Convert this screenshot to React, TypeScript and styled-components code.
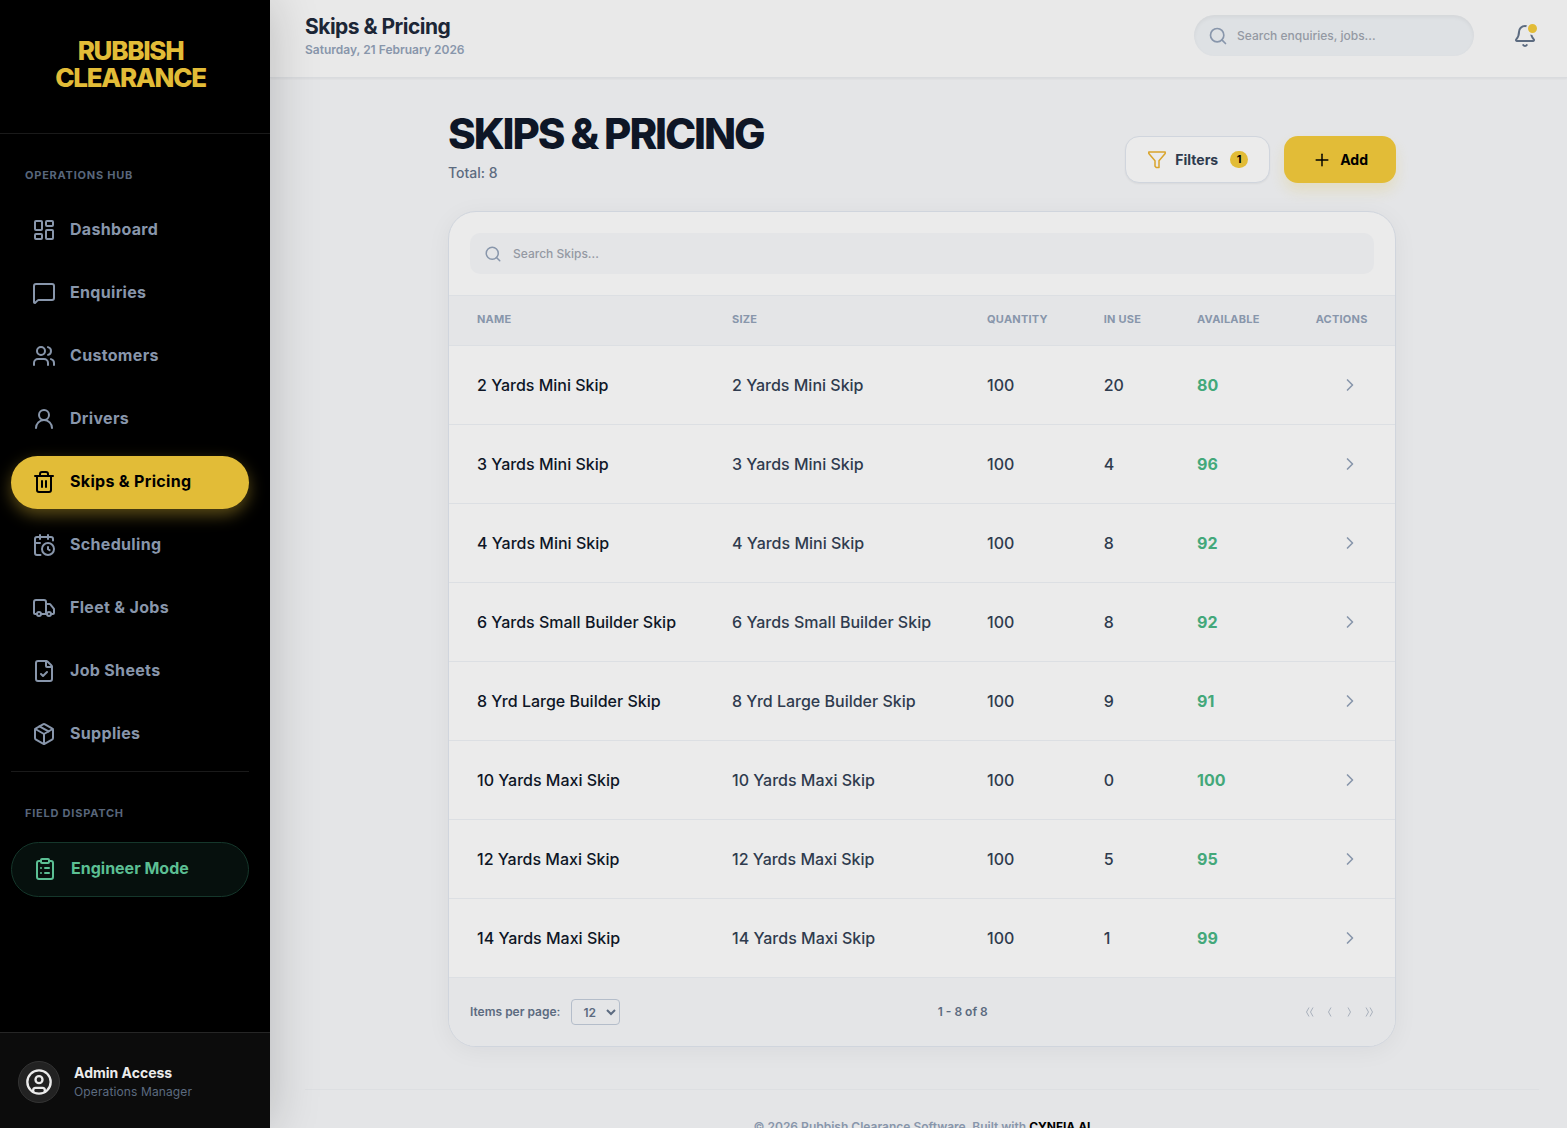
import React from "react";
import styled, { createGlobalStyle, css } from "styled-components";
import {
  Bell, CalendarClock, ChevronRight, CircleUser, ClipboardList, FileCheck, LayoutDashboard,
  MessageSquare, Package, Plus, Search, Trash2, Truck, UserRound, Users,
} from "lucide-react";

const yellow = "#e2bc37";
const slate400 = "#8896ab";
const slate500 = "#5c6b80";
const panel = "#ebebeb";
const canvas = "#e4e5e7";
const line = "#dcdfe3";
const edge = "#d0d5dd";

const GlobalStyle = createGlobalStyle`
  *, *::before, *::after { box-sizing: border-box; }
  body {
    margin: 0;
    background: ${canvas};
    font-family: Inter, "Liberation Sans", sans-serif;
    font-size: 14px;
    color: #0e1626;
    -webkit-font-smoothing: antialiased;
  }
  button, input, select { font: inherit; }
  button { border: 0; background: none; padding: 0; cursor: pointer; }
`;

const Shell = styled.div`
  display: grid;
  grid-template-columns: 270px minmax(0, 1fr);
  height: 100vh;
  overflow: hidden;
`;

const Sidebar = styled.aside`
  position: relative;
  z-index: 2;
  display: flex;
  flex-direction: column;
  min-height: 0;
  background: #000;
  box-shadow: 0 0 48px rgba(0, 0, 0, 0.2);
`;

const Brand = styled.div`
  padding: 37px 37px 42px 28px;
  border-bottom: 1px solid #1a1a1a;
  color: ${yellow};
  font-size: 26px;
  line-height: 27px;
  font-weight: 800;
  letter-spacing: -0.05em;
  text-align: center;
`;

const Nav = styled.nav`
  flex: 1;
  min-height: 0;
  overflow: hidden;
  padding: 34px 21px 20px 11px;
`;

const SectionLabel = styled.h2`
  margin: 0;
  padding: 0 14px;
  color: #58667b;
  font-size: 11px;
  line-height: 14px;
  font-weight: 700;
  letter-spacing: 0.07em;
  text-transform: uppercase;
`;

const NavList = styled.ul`
  display: flex;
  flex-direction: column;
  gap: 10px;
  margin: 22px 0 0;
  padding: 0;
  list-style: none;
`;

const NavLink = styled.a<{ $active?: boolean; $field?: boolean }>`
  display: flex;
  align-items: center;
  gap: 14px;
  height: 53px;
  padding: 0 21px 2px;
  border-radius: 28px;
  color: ${slate400};
  font-size: 16px;
  line-height: 24px;
  font-weight: 700;
  letter-spacing: 0.02em;
  text-decoration: none;
  ${(p) => p.$active && css`
    background: ${yellow};
    color: #000;
    box-shadow: 0 6px 16px rgba(226, 188, 55, 0.4);
  `}
  ${(p) => p.$field && css`
    height: 55px;
    border: 1px solid #15372b;
    background: #06100d;
    color: #5bbf93;
    letter-spacing: 0;
  `}
`;

const NavText = styled.span`
  padding-bottom: 2px;
`;

const FieldSection = styled.section`
  margin-top: 10px;
  padding-top: 34px;
  border-top: 1px solid #1a1a1a;
`;

const UserPanel = styled.div`
  display: flex;
  align-items: center;
  gap: 14px;
  height: 96px;
  padding: 2px 18px 0;
  border-top: 1px solid #262626;
  background: #0c0c0c;
`;

const Avatar = styled.span`
  display: grid;
  place-items: center;
  width: 42px;
  height: 42px;
  border: 1px solid #343434;
  border-radius: 50%;
  background: #222;
  color: #ebebeb;
`;

const UserName = styled.div`
  color: #ebebeb;
  font-size: 14px;
  line-height: 20px;
  font-weight: 700;
`;

const UserRole = styled.div`
  color: ${slate500};
  font-size: 12px;
  line-height: 18px;
  letter-spacing: 0.01em;
`;

const Page = styled.div`
  display: flex;
  flex-direction: column;
  min-width: 0;
  min-height: 0;
`;

const TopBar = styled.header`
  display: flex;
  align-items: center;
  justify-content: space-between;
  flex: none;
  height: 78px;
  padding: 0 28px 6px 35px;
  border-bottom: 1px solid #d9dbde;
  background: #e9e9e9;
  box-shadow: 0 1px 2px rgba(0, 0, 0, 0.05);
`;

const PageHeading = styled.div`
  padding-top: 2px;
`;

const PageName = styled.div`
  color: #1c2636;
  font-size: 21px;
  line-height: 26px;
  font-weight: 700;
  letter-spacing: -0.025em;
`;

const Today = styled.div`
  color: ${slate400};
  font-size: 12px;
  line-height: 20px;
  font-weight: 600;
`;

const TopTools = styled.div`
  display: flex;
  align-items: center;
  gap: 37px;
`;

const SearchField = styled.label<{ $pill?: boolean }>`
  display: flex;
  align-items: center;
  gap: 11px;
  height: 41px;
  padding: 0 14px;
  border-radius: 10px;
  background: ${canvas};
  color: ${slate400};
  ${(p) => p.$pill && css`
    gap: 9px;
    width: 280px;
    border-radius: 21px;
    background: #dee1e4;
    box-shadow: inset 0 2px 4px rgba(0, 0, 0, 0.05);
  `}
`;

const SearchInput = styled.input`
  flex: 1;
  min-width: 0;
  padding: 0;
  border: 0;
  outline: 0;
  background: none;
  color: #1c2636;
  font-size: 12px;
  line-height: 20px;
  font-weight: 500;
  &::placeholder { color: #9499a3; opacity: 1; }
`;

const BellButton = styled.button`
  position: relative;
  display: grid;
  place-items: center;
  width: 28px;
  height: 28px;
  color: ${slate500};
`;

const BellDot = styled.span`
  position: absolute;
  top: 0;
  right: 0;
  width: 13px;
  height: 13px;
  border: 2px solid #e9e9e9;
  border-radius: 50%;
  background: ${yellow};
`;

const Main = styled.main`
  flex: 1;
  min-height: 0;
  overflow: hidden;
  padding: 35px 28px 0 35px;
`;

const Content = styled.div`
  max-width: 948px;
  margin: 0 auto;
`;

const Heading = styled.div`
  display: flex;
  align-items: flex-end;
  justify-content: space-between;
  margin-bottom: 28px;
`;

const Title = styled.h1`
  margin: 0 0 8px;
  font-size: 42px;
  line-height: 42px;
  font-weight: 800;
  letter-spacing: -0.05em;
  text-transform: uppercase;
`;

const Total = styled.p`
  margin: 0;
  color: ${slate500};
  font-size: 14px;
  line-height: 20px;
  font-weight: 500;
`;

const Actions = styled.div`
  display: flex;
  gap: 14px;
`;

const ActionButton = styled.button<{ $primary?: boolean }>`
  display: flex;
  align-items: center;
  gap: 8px;
  height: 47px;
  padding: 0 21px;
  border: 1px solid ${edge};
  border-radius: 14px;
  background: ${panel};
  color: #2e3a4d;
  font-size: 14px;
  line-height: 20px;
  font-weight: 700;
  box-shadow: 0 1px 2px rgba(0, 0, 0, 0.05);
  ${(p) => p.$primary && css`
    padding: 0 28px;
    border: 0;
    background: ${yellow};
    color: #000;
    box-shadow: 0 8px 14px rgba(226, 188, 55, 0.2);
  `}
`;

const Count = styled.span`
  display: grid;
  place-items: center;
  width: 18px;
  height: 17px;
  margin-left: 4px;
  border-radius: 9px;
  background: ${yellow};
  color: #000;
  font-size: 11px;
  line-height: 17px;
`;

const Card = styled.section`
  overflow: hidden;
  border: 1px solid ${edge};
  border-radius: 28px;
  background: ${panel};
  box-shadow: 0 4px 24px rgba(15, 23, 42, 0.05);
`;

const CardSearch = styled.div`
  padding: 21px;
  border-bottom: 1px solid ${line};
`;

const Table = styled.table`
  width: 100%;
  border-collapse: separate;
  border-spacing: 0;
  text-align: left;
`;

const HeadCell = styled.th`
  height: 50px;
  padding: 0 28px 3px;
  border-bottom: 1px solid ${line};
  background: ${canvas};
  color: ${slate400};
  font-size: 11px;
  line-height: 14px;
  font-weight: 700;
  letter-spacing: 0.02em;
  text-transform: uppercase;
  white-space: nowrap;
`;

const Cell = styled.td<{ $tone?: "name" | "free" }>`
  height: 79px;
  padding: 0 28px;
  border-bottom: 1px solid ${line};
  color: ${(p) => (p.$tone === "name" ? "#0e1626" : p.$tone === "free" ? "#43a87a" : "#2f3b4e")};
  font-size: 16px;
  line-height: 24px;
  font-weight: ${(p) => (p.$tone === "free" ? 700 : 500)};
  white-space: nowrap;
`;

const OpenButton = styled.button`
  display: grid;
  place-items: center;
  width: 36px;
  height: 36px;
  margin-left: auto;
  color: ${slate400};
`;

const Pager = styled.div`
  display: flex;
  align-items: center;
  justify-content: space-between;
  padding: 21px;
  background: ${canvas};
  color: ${slate500};
  font-size: 12px;
  line-height: 20px;
  font-weight: 600;
`;

const PerPage = styled.label`
  display: flex;
  align-items: center;
  gap: 11px;
`;

const PageSize = styled.select`
  width: 49px;
  height: 26px;
  padding: 0 0 0 7px;
  border: 1px solid #b4bdca;
  border-radius: 4px;
  background: ${canvas};
  color: ${slate500};
`;

const PagerButtons = styled.div`
  display: flex;
  align-items: center;
  gap: 13px;
`;

const StepButton = styled.button`
  display: grid;
  color: #a8b0bc;
`;

const Footer = styled.footer`
  margin-top: 42px;
  padding-top: 28px;
  border-top: 1px solid #dddfe2;
  color: ${slate400};
  font-size: 12px;
  line-height: 18px;
  font-weight: 600;
  text-align: center;
  strong { color: #000; font-weight: 700; }
`;

const navItems = [
  { label: "Dashboard", Icon: LayoutDashboard },
  { label: "Enquiries", Icon: MessageSquare },
  { label: "Customers", Icon: Users },
  { label: "Drivers", Icon: UserRound },
  { label: "Skips & Pricing", Icon: Trash2, active: true },
  { label: "Scheduling", Icon: CalendarClock },
  { label: "Fleet & Jobs", Icon: Truck },
  { label: "Job Sheets", Icon: FileCheck },
  { label: "Supplies", Icon: Package },
];

const skips = [
  { name: "2 Yards Mini Skip", quantity: 100, inUse: 20 },
  { name: "3 Yards Mini Skip", quantity: 100, inUse: 4 },
  { name: "4 Yards Mini Skip", quantity: 100, inUse: 8 },
  { name: "6 Yards Small Builder Skip", quantity: 100, inUse: 8 },
  { name: "8 Yrd Large Builder Skip", quantity: 100, inUse: 9 },
  { name: "10 Yards Maxi Skip", quantity: 100, inUse: 0 },
  { name: "12 Yards Maxi Skip", quantity: 100, inUse: 5 },
  { name: "14 Yards Maxi Skip", quantity: 100, inUse: 1 },
];

const FunnelIcon = () => (
  <svg width="20" height="20" viewBox="0 0 20 20" fill="none" stroke="#d9a42c" strokeWidth="1.5" strokeLinecap="round" strokeLinejoin="round" aria-hidden="true">
    <path d="M1.800 2h16.400v1.500l-6.200 7.300v6.700h-2.800l-1.200-1.200v-5.500l-6.200-7.300z" />
  </svg>
);

const StepIcon = ({ double, forward }: { double?: boolean; forward?: boolean }) => (
  <svg width={double ? 9 : 6} height="10" viewBox={double ? "0 0 9 10" : "0 0 6 10"} fill="none" stroke="currentColor" aria-hidden="true">
    <g transform={forward ? `translate(${double ? 9 : 6} 0) scale(-1 1)` : undefined}>
      <path d="M4 .500l-2.500 4.500l2.500 4.500" />
      {double && <path d="M8 .500l-2.500 4.500l2.500 4.500" />}
    </g>
  </svg>
);

export default function App() {
  return (
    <>
      <GlobalStyle />
      <Shell>
        <Sidebar>
          <Brand>RUBBISH<br />CLEARANCE</Brand>
          <Nav>
            <SectionLabel>Operations Hub</SectionLabel>
            <NavList>
              {navItems.map(({ label, Icon, active }) => (
                <li key={label}>
                  <NavLink href="#" $active={active} aria-current={active ? "page" : undefined}>
                    <Icon size={24} />
                    <NavText>{label}</NavText>
                  </NavLink>
                </li>
              ))}
            </NavList>
            <FieldSection>
              <SectionLabel>Field Dispatch</SectionLabel>
              <NavList>
                <li>
                  <NavLink href="#" $field>
                    <ClipboardList size={24} />
                    <NavText>Engineer Mode</NavText>
                  </NavLink>
                </li>
              </NavList>
            </FieldSection>
          </Nav>
          <UserPanel>
            <Avatar><CircleUser size={28} /></Avatar>
            <div>
              <UserName>Admin Access</UserName>
              <UserRole>Operations Manager</UserRole>
            </div>
          </UserPanel>
        </Sidebar>

        <Page>
          <TopBar>
            <PageHeading>
              <PageName>Skips &amp; Pricing</PageName>
              <Today>Saturday, 21 February 2026</Today>
            </PageHeading>
            <TopTools>
              <SearchField $pill>
                <Search size={20} />
                <SearchInput type="text" aria-label="Search enquiries and jobs" placeholder="Search enquiries, jobs..." />
              </SearchField>
              <BellButton aria-label="Notifications">
                <Bell size={24} />
                <BellDot />
              </BellButton>
            </TopTools>
          </TopBar>

          <Main>
            <Content>
              <Heading>
                <div>
                  <Title>Skips &amp; Pricing</Title>
                  <Total>Total: 8</Total>
                </div>
                <Actions>
                  <ActionButton><FunnelIcon />Filters<Count>1</Count></ActionButton>
                  <ActionButton $primary><Plus size={20} strokeWidth={1.75} />Add</ActionButton>
                </Actions>
              </Heading>

              <Card>
                <CardSearch>
                  <SearchField>
                    <Search size={18} />
                    <SearchInput type="text" aria-label="Search skips" placeholder="Search Skips..." />
                  </SearchField>
                </CardSearch>
                <Table>
                  <thead>
                    <tr>
                      {["Name", "Size", "Quantity", "In Use", "Available", "Actions"].map((h) => (
                        <HeadCell key={h} scope="col">{h}</HeadCell>
                      ))}
                    </tr>
                  </thead>
                  <tbody>
                    {skips.map((s) => (
                      <tr key={s.name}>
                        <Cell $tone="name">{s.name}</Cell>
                        <Cell>{s.name}</Cell>
                        <Cell>{s.quantity}</Cell>
                        <Cell>{s.inUse}</Cell>
                        <Cell $tone="free">{s.quantity - s.inUse}</Cell>
                        <Cell>
                          <OpenButton aria-label={`Open ${s.name}`}><ChevronRight size={20} /></OpenButton>
                        </Cell>
                      </tr>
                    ))}
                  </tbody>
                </Table>
                <Pager>
                  <PerPage>
                    Items per page:
                    <PageSize defaultValue="12">
                      <option>12</option>
                      <option>24</option>
                      <option>48</option>
                    </PageSize>
                  </PerPage>
                  <span>1 - 8 of 8</span>
                  <PagerButtons>
                    <StepButton disabled aria-label="First page"><StepIcon double /></StepButton>
                    <StepButton disabled aria-label="Previous page"><StepIcon /></StepButton>
                    <StepButton disabled aria-label="Next page"><StepIcon forward /></StepButton>
                    <StepButton disabled aria-label="Last page"><StepIcon double forward /></StepButton>
                  </PagerButtons>
                </Pager>
              </Card>
            </Content>
            <Footer>© 2026 Rubbish Clearance Software. Built with <strong>CYNFIA AI</strong></Footer>
          </Main>
        </Page>
      </Shell>
    </>
  );
}
